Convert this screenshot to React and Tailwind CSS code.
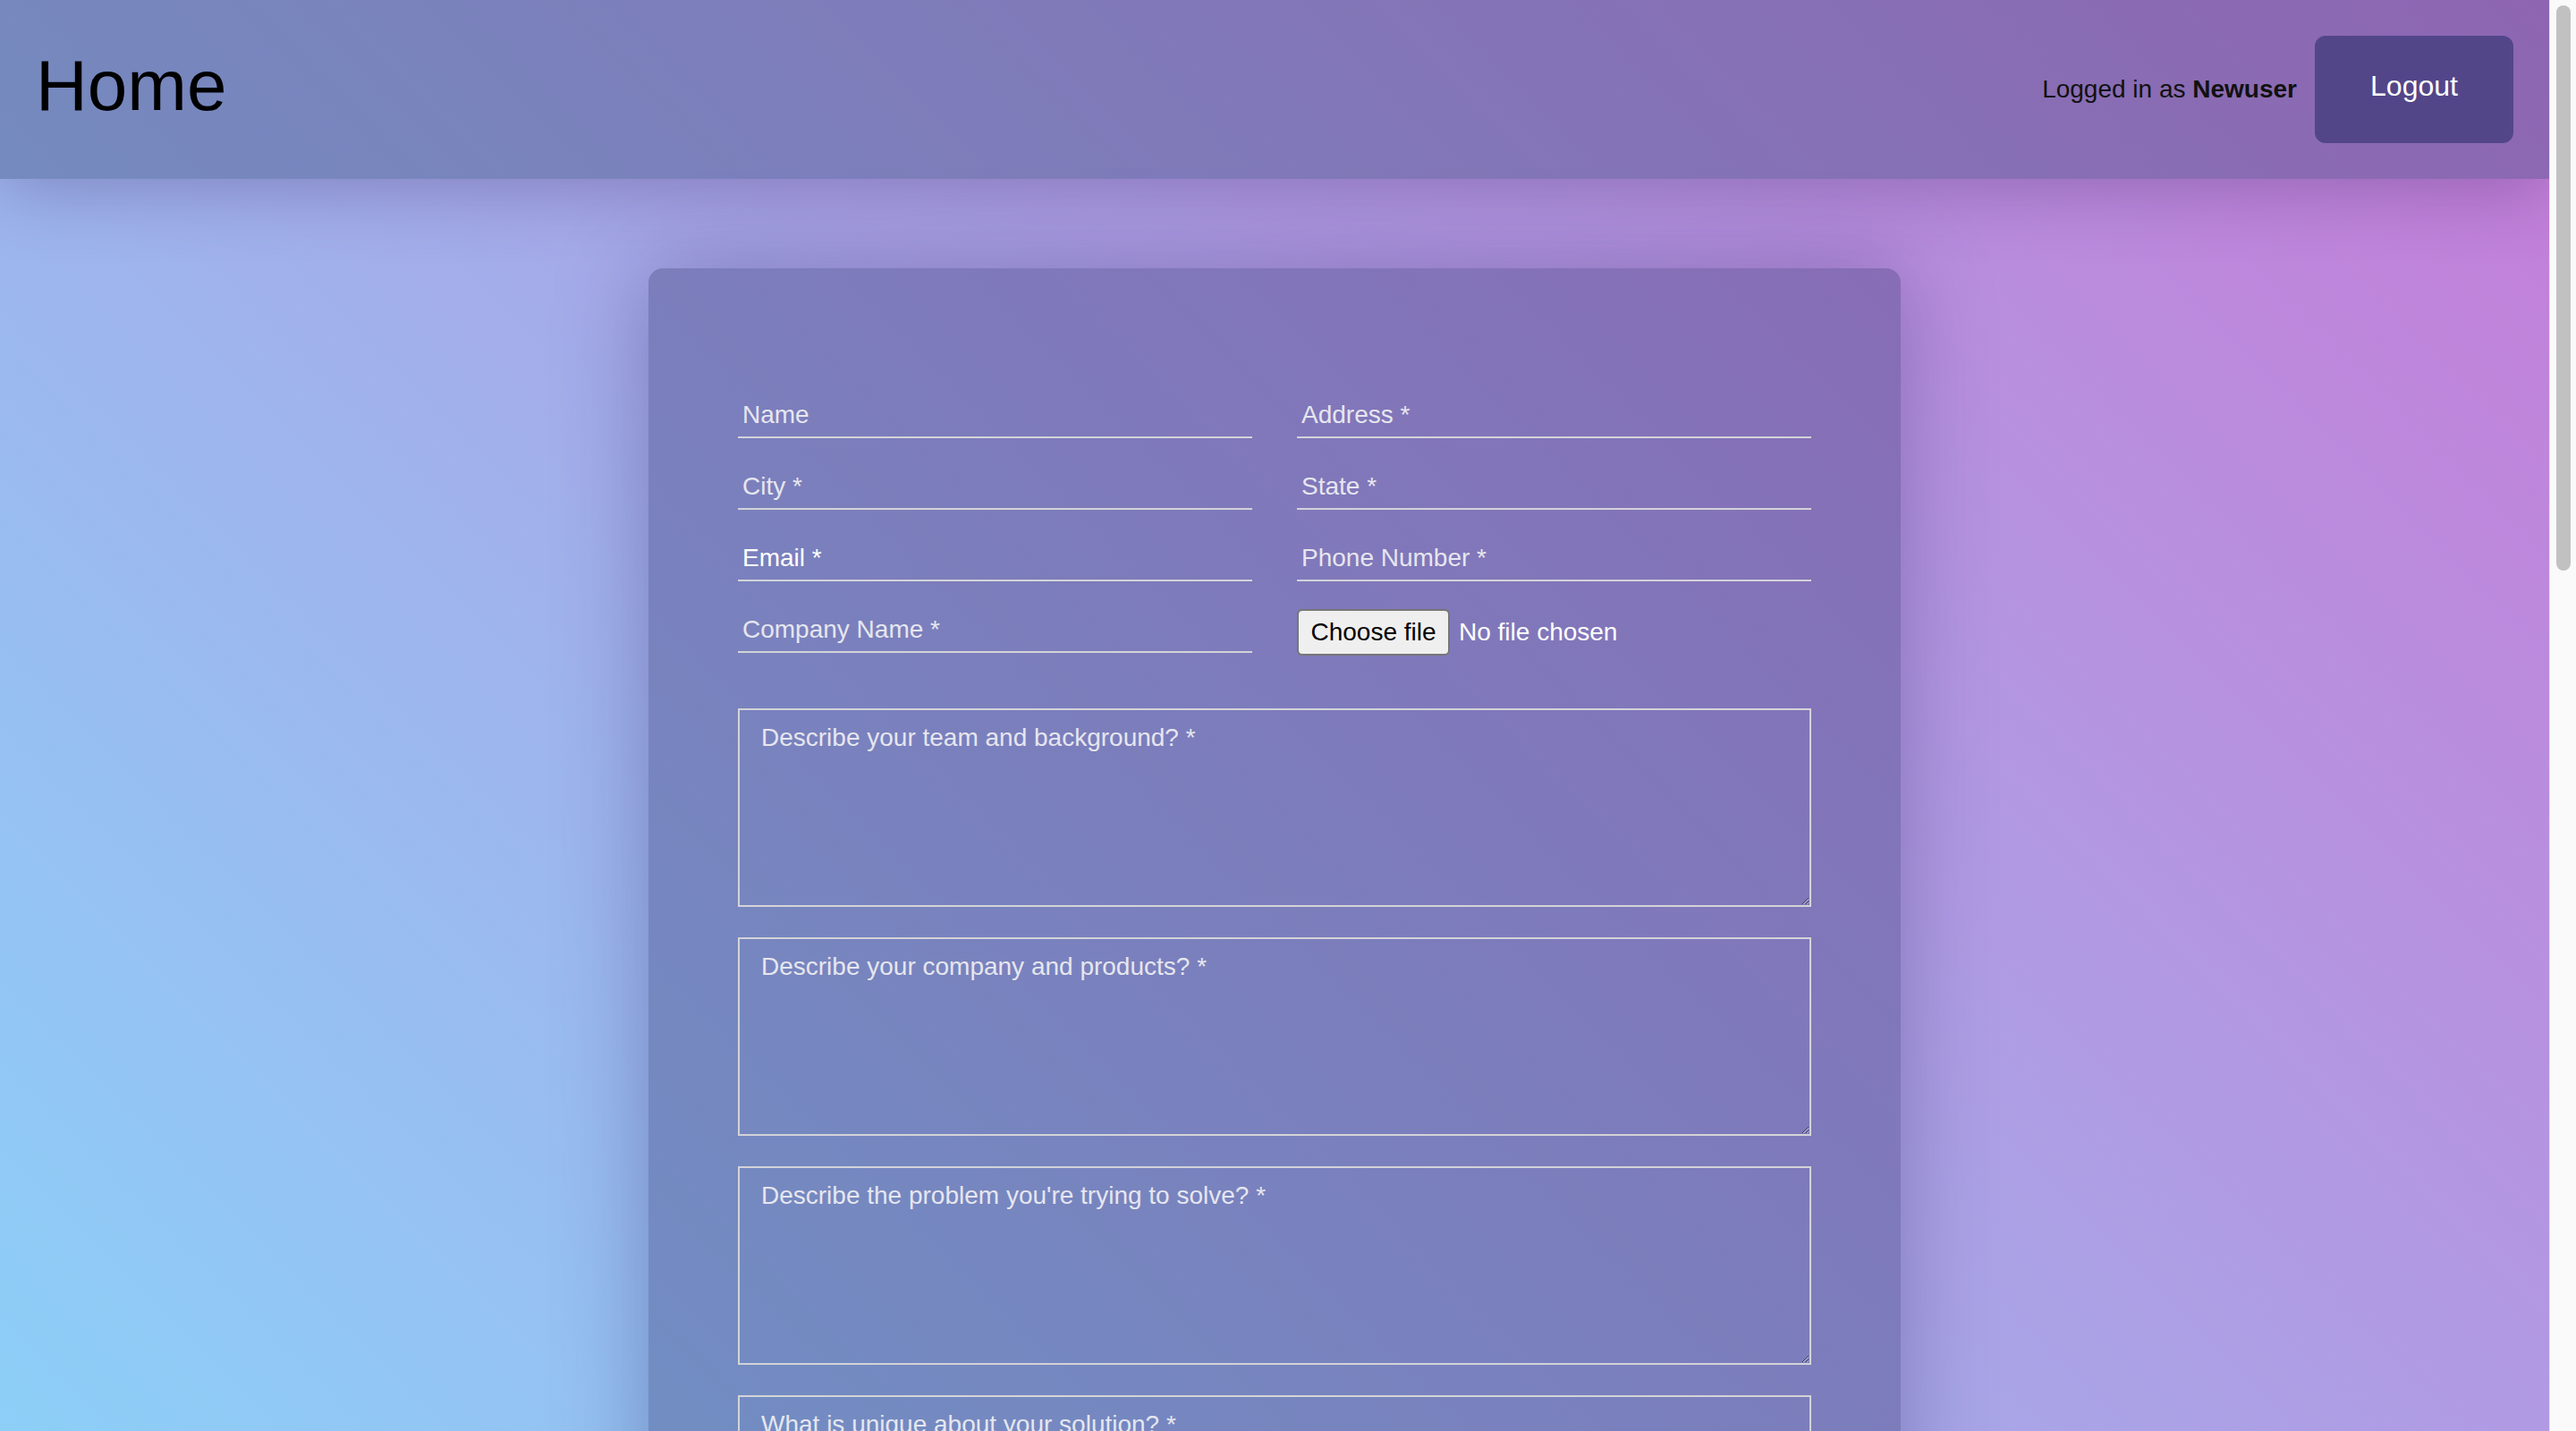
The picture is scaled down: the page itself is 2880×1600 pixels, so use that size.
const inputCls =
  "h-[46px] w-full border-0 border-b-2 border-[#d3d3d8] bg-transparent px-[5px] pt-0 pb-[4px] text-[28px] text-white outline-none placeholder:text-[#e6e6ef]";

const areaCls =
  "h-[222px] w-full resize-y border-2 border-[#d3d3d8] bg-transparent px-[24px] pt-[10px] text-[28px] text-white outline-none placeholder:text-[#e6e6ef]";

const questions = [
  "Describe your team and background? *",
  "Describe your company and products? *",
  "Describe the problem you're trying to solve? *",
  "What is unique about your solution? *",
  "How do you plan to grow? *",
];

export default function App() {
  return (
    <div className="flex h-screen w-full overflow-hidden font-['Liberation_Sans',Arial,sans-serif]">
      <div className="flex h-full flex-1 flex-col overflow-hidden bg-[linear-gradient(45deg,#8ccff7,#c57cd8)]">
        <header className="relative z-10 flex h-[200px] shrink-0 items-center justify-between bg-[rgba(40,60,105,0.35)] px-[40px] shadow-[0_10px_80px_rgba(50,30,90,0.3)]">
          <h1 className="-mt-[8px] text-[80px] font-normal text-black">Home</h1>
          <div className="flex items-center gap-[20px]">
            <span className="text-[28px] text-[#111]">
              Logged in as <b>Newuser</b>
            </span>
            <button className="h-[120px] w-[222px] rounded-[12px] bg-[#524689] pb-[8px] text-[32px] text-white">
              Logout
            </button>
          </div>
        </header>

        <div className="mx-auto mt-[100px] w-[1400px] shrink-0 rounded-[16px] bg-[rgba(45,45,105,0.35)] px-[100px] pb-[100px] pt-[144px] shadow-[0_0_100px_rgba(50,35,100,0.35)]">
          <div className="grid grid-cols-2 gap-x-[50px] gap-y-[34px]">
            <input className={inputCls} placeholder="Name" />
            <input className={inputCls} placeholder="Address *" />
            <input className={inputCls} placeholder="City *" />
            <input className={inputCls} placeholder="State *" />
            <input className={inputCls + " placeholder:text-white"} placeholder="Email *" />
            <input className={inputCls} placeholder="Phone Number *" />
            <input className={inputCls} placeholder="Company Name *" />
            <div className="h-[46px]">
              <div className="-mt-[3px] flex h-[52px] items-center gap-[10px]">
                <button className="h-[52px] w-[171px] rounded-[6px] border-2 border-[#767676] bg-[#efefef] text-[28px] text-black">
                  Choose file
                </button>
                <span className="text-[28px] text-white">No file chosen</span>
              </div>
            </div>
          </div>

          <div className="mt-[62px] flex flex-col gap-[34px]">
            {questions.map((q) => (
              <textarea key={q} className={areaCls} placeholder={q} />
            ))}
          </div>
        </div>
      </div>

      <div className="h-full w-[30px] shrink-0 border-l border-[#e6e6e6] bg-[#fafafa] pt-[6px]">
        <div className="mx-auto h-[632px] w-[16px] rounded-full bg-[#c1c1c1]" />
      </div>
    </div>
  );
}
